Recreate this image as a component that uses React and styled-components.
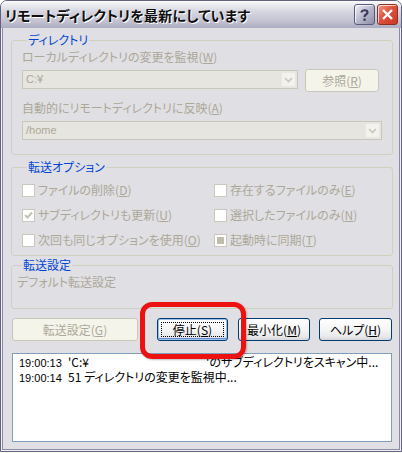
import React from 'react'
import styled, { createGlobalStyle } from 'styled-components'

const Global = createGlobalStyle`
  html, body {
    margin: 0;
    padding: 0;
    background: #ffffff;
  }
  body {
    font-family: "Noto Sans CJK JP", "Liberation Sans", sans-serif;
    font-size: 12px;
  }
`;

const Window = styled.div`
  position: relative;
  width: 402px;
  height: 452px;
  display: flex;
  flex-direction: column;
  box-sizing: border-box;
  border: 1px solid #62627e;
  border-radius: 7px 7px 0 0;
  overflow: hidden;
  font-feature-settings: "palt";
`;

const TitleBar = styled.div`
  height: 27px;
  flex: none;
  box-sizing: border-box;
  display: flex;
  align-items: center;
  padding: 0 3px 0 4px;
  background: linear-gradient(to bottom, #fdfdff 0%, #ececf2 12%, #d6d6e0 40%, #c2c2d2 75%, #acacc2 100%);
`;

const Title = styled.div`
  flex: 1;
  font-weight: bold;
  font-size: 14px;
  letter-spacing: 0.2px;
  color: #0f0f0f;
  text-shadow: 1px 1px 0 #ffffff;
`;

const CaptionButton = styled.div`
  width: 21px;
  height: 21px;
  box-sizing: border-box;
  margin-left: 2px;
  border: 1px solid ${p => (p.$close ? '#8c3026' : '#5a5a7a')};
  border-radius: 3px;
  display: flex;
  align-items: center;
  justify-content: center;
  background: ${p =>
    p.$close
      ? 'linear-gradient(135deg, #f39a86 0%, #e0503c 45%, #c8382a 100%)'
      : 'linear-gradient(135deg, #f2f2f8 0%, #b8b8cc 50%, #8e8eaa 100%)'};
  box-shadow: inset 1px 1px 0 rgba(255, 255, 255, 0.7);
`;

const Client = styled.div`
  flex: 1;
  display: flex;
  flex-direction: column;
  background: #e0dfe3;
  border: 1px solid #f2f2f6;
  border-top: none;
  box-shadow: inset 1px 0 0 #8a8aa6, inset -1px 0 0 #8a8aa6, inset 0 -1px 0 #8a8aa6;
  padding: 5px 7px 8px 9px;
`;

const Group = styled.fieldset`
  margin: ${p => p.$top || 0}px 0 0 0;
  padding: ${p => p.$pad};
  border: 1px solid #d0d0bf;
  border-radius: 3px;
  min-width: 0;
`;

const Legend = styled.legend`
  padding: 0 1px;
  margin-left: 5px;
  line-height: 14px;
  color: #0046d5;
`;

const Label = styled.div`
  line-height: 14px;
  color: #aca899;
  margin-top: ${p => p.$top || 0}px;
`;

const Row = styled.div`
  display: flex;
  align-items: flex-start;
  margin-top: ${p => p.$top || 0}px;
`;

const Combo = styled.div`
  width: ${p => p.$w}px;
  height: 19px;
  box-sizing: border-box;
  display: flex;
  align-items: center;
  border: 1px solid #c9c7ba;
  background: #e6e5df;
  padding: 1px;
`;

const ComboText = styled.div`
  flex: 1;
  padding-left: 2px;
  line-height: 15px;
  color: #aca899;
  font-family: "Liberation Sans", "Noto Sans CJK JP", sans-serif;
  font-size: 11px;
`;

const DropButton = styled.div`
  width: 15px;
  height: 15px;
  box-sizing: border-box;
  border: 1px solid #e8e7e0;
  border-radius: 2px;
  background: #f3f2ee;
  display: flex;
  align-items: center;
  justify-content: center;
`;

const Button = styled.div`
  width: ${p => p.$w}px;
  height: 23px;
  box-sizing: border-box;
  margin-left: ${p => p.$left || 0}px;
  margin-top: ${p => p.$mt || 0}px;
  display: flex;
  align-items: center;
  justify-content: center;
  border-radius: 3px;
  line-height: 14px;
  border: 1px solid ${p => (p.$disabled ? '#c9c7ba' : '#003c74')};
  color: ${p => (p.$disabled ? '#aca899' : '#000000')};
  background: ${p =>
    p.$disabled
      ? '#f5f4ea'
      : 'linear-gradient(to bottom, #ffffff 0%, #f5f5f5 50%, #e8e8ea 85%, #d6d6dc 100%)'};
  box-shadow: ${p => (p.$default ? 'inset 0 0 0 1px #9fbfe8, inset 0 -1px 0 1px #6a8fd4' : 'none')};
  position: relative;
`;

const Focus = styled.span`
  position: absolute;
  inset: 3px;
  border: 1px dotted #000000;
`;

const U = styled.span`
  text-decoration: underline;
  text-underline-offset: 1px;
`;

const Options = styled.div`
  display: grid;
  grid-template-columns: 192px 1fr;
  row-gap: 11px;
`;

const Check = styled.div`
  display: flex;
  align-items: center;
  height: 14px;
  color: #aca899;
  line-height: 14px;
`;

const Box = styled.div`
  width: 13px;
  height: 13px;
  box-sizing: border-box;
  margin-right: 3px;
  border: 1px solid #cac8bb;
  background: #ffffff;
  display: flex;
  align-items: center;
  justify-content: center;
`;

const Fill = styled.div`
  width: 7px;
  height: 7px;
  background: #c0bdad;
`;

const ButtonRow = styled.div`
  display: flex;
  margin-top: 9px;
  padding-left: 1px;
`;

const Log = styled.div`
  margin: 12px 0 0 1px;
  width: 380px;
  height: 89px;
  box-sizing: border-box;
  border: 1px solid #7f9db9;
  background: #ffffff;
  padding: 1px 0 0 6px;
`;

const LogLine = styled.div`
  display: flex;
  align-items: baseline;
  line-height: 14px;
  color: #000000;
  white-space: nowrap;
`;

const Time = styled.span`
  flex: none;
  width: 49px;
  font-family: "Liberation Sans", sans-serif;
  font-size: 11px;
`;

const Gap = styled.span`
  flex: none;
  display: inline-block;
  width: ${p => p.$w}px;
`;

const Highlight = styled.div`
  position: absolute;
  left: 139px;
  top: 301px;
  width: 106px;
  height: 57px;
  box-sizing: border-box;
  border: 5px solid #ee1111;
  border-radius: 12px;
  box-shadow: 1px 1px 2px rgba(0, 0, 0, 0.25);
`;

const Chevron = () => (
  <svg width="9" height="6" viewBox="0 0 9 6">
    <path d="M1 1 L4.5 4.5 L8 1" fill="none" stroke="#c9c7ba" strokeWidth="1.6" />
  </svg>
);

const Tick = () => (
  <svg width="9" height="9" viewBox="0 0 9 9">
    <path d="M1 4 L3.5 6.5 L8 1.5" fill="none" stroke="#c3c1b2" strokeWidth="2" />
  </svg>
);

const App = () => {
  return (
    <Window>
      <Global />
      <TitleBar>
        <Title>リモートディレクトリを最新にしています</Title>
        <CaptionButton>
          <svg width="13" height="14" viewBox="0 0 13 14">
            <path d="M3.5 4.5 C3.5 1.5 9.5 1.5 9.5 4.5 C9.5 6.5 6.5 6.5 6.5 9" fill="none" stroke="#3a3a5a" strokeWidth="2.2" />
            <rect x="5.4" y="10.5" width="2.3" height="2.3" fill="#3a3a5a" />
          </svg>
        </CaptionButton>
        <CaptionButton $close>
          <svg width="13" height="13" viewBox="0 0 13 13">
            <path d="M2 2 L11 11 M11 2 L2 11" stroke="#ffffff" strokeWidth="2.4" />
          </svg>
        </CaptionButton>
      </TitleBar>

      <Client>
        <Group $pad="3px 10px 14px 10px">
          <Legend>ディレクトリ</Legend>
          <Label>ローカルディレクトリの変更を監視(<U>W</U>)</Label>
          <Row $top={6}>
            <Combo $w={276}>
              <ComboText>C:¥</ComboText>
              <DropButton><Chevron /></DropButton>
            </Combo>
            <Button $w={74} $left={7} $mt={-1} $disabled>参照(<U>R</U>)</Button>
          </Row>
          <Label $top={9}>自動的にリモートディレクトリに反映(<U>A</U>)</Label>
          <Row $top={6}>
            <Combo $w={360}>
              <ComboText>/home</ComboText>
              <DropButton><Chevron /></DropButton>
            </Combo>
          </Row>
        </Group>

        <Group $top={5} $pad="9px 10px 8px 10px">
          <Legend>転送オプション</Legend>
          <Options>
            <Check><Box />ファイルの削除(<U>D</U>)</Check>
            <Check><Box />存在するファイルのみ(<U>E</U>)</Check>
            <Check><Box><Tick /></Box>サブディレクトリも更新(<U>U</U>)</Check>
            <Check><Box />選択したファイルのみ(<U>N</U>)</Check>
            <Check><Box />次回も同じオプションを使用(<U>O</U>)</Check>
            <Check><Box><Fill /></Box>起動時に同期(<U>T</U>)</Check>
          </Options>
        </Group>

        <Group $top={2} $pad="3px 5px 19px 5px">
          <Legend>転送設定</Legend>
          <Label>デフォルト転送設定</Label>
        </Group>

        <ButtonRow>
          <Button $w={126} $disabled>転送設定(<U>G</U>)</Button>
          <Button $w={71} $left={19} $default>停止(<U>S</U>)<Focus /></Button>
          <Button $w={72} $left={10}>最小化(<U>M</U>)</Button>
          <Button $w={73} $left={9}>ヘルプ(<U>H</U>)</Button>
        </ButtonRow>

        <Log>
          <LogLine>
            <Time>19:00:13</Time>
            <span>'C:¥</span>
            <Gap $w={117} />
            <span>'のサブディレクトリをスキャン中...</span>
          </LogLine>
          <LogLine>
            <Time>19:00:14</Time>
            <span>51 ディレクトリの変更を監視中...</span>
          </LogLine>
        </Log>
      </Client>

      <Highlight />
    </Window>
  );
}

export default App
